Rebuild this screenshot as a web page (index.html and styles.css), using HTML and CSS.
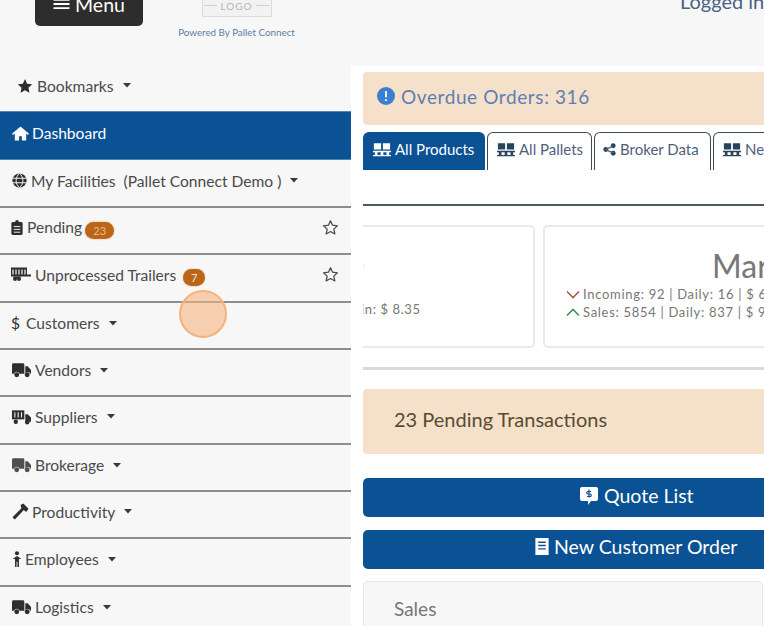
FILE: index.html
```html
<!DOCTYPE html>
<html lang="en">
<head>
<meta charset="utf-8">
<title>Dashboard</title>
<link rel="stylesheet" href="styles.css">
</head>
<body>
<svg class="defs" width="0" height="0" aria-hidden="true">
  <defs>
    <symbol id="pallets" viewBox="0 0 20 16"><path d="M1 1h8v7H1zM11 1h8v7h-8z"/><path d="M0 9.500h20v1.500H0zM0 14h20v1.500H0zM2 11h3v3H2zM8.500 11h3v3h-3zM15 11h3v3h-3z"/></symbol>
    <symbol id="truck" viewBox="0 0 20 16"><path d="M1.500 1h10A1.500 1.500 0 0 1 13 2.500V12H8a3.200 3.200 0 0 0-6 0H0V2.500A1.500 1.500 0 0 1 1.500 1z"/><path d="M14 4h2.500L20 8v4h-.6a3.200 3.200 0 0 0-5.400-.6z"/><circle cx="5" cy="13" r="2.600"/><circle cx="16" cy="13" r="2.600"/></symbol>
    <symbol id="supply" viewBox="0 0 20 16"><path d="M0 1h13v9.500H0z"/><path d="M3 3v5.500M6.500 3v5.500M10 3v5.500" stroke="#f7f7f7" stroke-width="1.100"/><path d="M14 5h2.500L20 8.500V13h-6z"/><circle cx="4" cy="13" r="2.300"/><circle cx="16" cy="13.500" r="2.300"/></symbol>
    <symbol id="caret" viewBox="0 0 8 5"><path d="M0 0h8L4 4.500z"/></symbol>
    <symbol id="staro" viewBox="0 0 24 24"><path d="M12 2.500l2.900 6.300 6.900.8-5.100 4.700 1.400 6.800-6.100-3.400-6.100 3.400 1.400-6.800L2.200 9.600l6.900-.8z" fill="none" stroke="currentColor" stroke-width="1.800" stroke-linejoin="round"/></symbol>
  </defs>
</svg>
<div class="page">
  <header class="topbar">
    <div class="menu-btn"><svg class="burger" viewBox="0 0 16 12"><path d="M0 1h16v1.800H0zM0 5.100h16v1.800H0zM0 9.200h16v1.800H0z"/></svg>Menu</div>
    <div class="brand">
      <div class="logo">LOGO</div>
      <div class="powered">Powered By Pallet Connect</div>
    </div>
    <div class="logged">Logged in</div>
  </header>
  <div class="columns">
    <nav class="sidebar">
      <div class="nav-item nav-bookmarks">
        <svg class="ico ico-star" viewBox="0 0 24 24"><path d="M12 1.500l3.200 7 7.600.9-5.600 5.200 1.500 7.500L12 18.300l-6.700 3.800 1.500-7.500L1.200 9.400l7.600-.9z"/></svg>
        <span>Bookmarks</span><svg class="caret"><use href="#caret"/></svg>
      </div>
      <div class="nav-item nav-active">
        <svg class="ico ico-home" viewBox="0 0 24 20"><path d="M12 0L0 10.500l1.500 1.500L4 10v10h6v-6h4v6h6V10l2.500 2 1.500-1.500z"/></svg>
        <span>Dashboard</span>
      </div>
      <div class="nav-item nav-fac">
        <svg class="ico ico-globe" viewBox="0 0 20 20"><circle cx="10" cy="10" r="9.500"/><path d="M.5 7h19M.5 13h19M10 .5c-6 5-6 14 0 19M10 .5c6 5 6 14 0 19" fill="none" stroke="#f7f7f7" stroke-width="1.300"/></svg>
        <span>My Facilities&nbsp; (Pallet Connect Demo )</span><svg class="caret"><use href="#caret"/></svg>
      </div>
      <div class="nav-item nav-split nav-pending">
        <div class="nav-left">
          <svg class="ico ico-clip" viewBox="0 0 12 16"><path d="M1.500 2H4a2 2 0 0 1 4 0h2.500A1.500 1.500 0 0 1 12 3.500v11a1.500 1.500 0 0 1-1.500 1.500h-9A1.500 1.500 0 0 1 0 14.500v-11A1.500 1.500 0 0 1 1.500 2z"/><path d="M2.500 7h7M2.500 10h7M2.500 13h7" stroke="#f7f7f7" stroke-width="1"/></svg>
          <span>Pending</span><span class="badge badge-wide">23</span>
        </div>
        <svg class="staro"><use href="#staro"/></svg>
      </div>
      <div class="nav-item nav-split nav-trailers">
        <div class="nav-left">
          <svg class="ico ico-trailer" viewBox="0 0 20 14"><path d="M0 0h16v9H0z"/><path d="M2 2v5M5 2v5M8 2v5M11 2v5M14 2v5" stroke="#f7f7f7" stroke-width="1.200"/><path d="M16 7h4v2h-4zM2.500 9h7v2h-7z"/><circle cx="4" cy="11.500" r="2"/><circle cx="8" cy="11.500" r="2"/></svg>
          <span>Unprocessed Trailers</span><span class="badge">7</span>
        </div>
        <svg class="staro"><use href="#staro"/></svg>
      </div>
      <div class="nav-item nav-cust"><span class="dollar">$</span><span>Customers</span><svg class="caret"><use href="#caret"/></svg></div>
      <div class="nav-item nav-vendors"><svg class="ico ico-truck"><use href="#truck"/></svg><span>Vendors</span><svg class="caret"><use href="#caret"/></svg></div>
      <div class="nav-item nav-suppliers"><svg class="ico ico-truck"><use href="#supply"/></svg><span>Suppliers</span><svg class="caret"><use href="#caret"/></svg></div>
      <div class="nav-item nav-brokerage"><svg class="ico ico-truck ico-soft"><use href="#truck"/></svg><span>Brokerage</span><svg class="caret"><use href="#caret"/></svg></div>
      <div class="nav-item nav-prod">
        <svg class="ico ico-hammer" viewBox="0 0 18 18"><path d="M9 2l3-1.500 5.500 5.500-2.500 3.500-2.500-2L3 17.500.5 15 10 5.500z"/></svg>
        <span>Productivity</span><svg class="caret"><use href="#caret"/></svg>
      </div>
      <div class="nav-item nav-emp">
        <svg class="ico ico-person" viewBox="0 0 10 18"><circle cx="5" cy="2.500" r="2.300"/><path d="M5 5.500L10 9H7.200v9H5.500v-6h-1v6H2.800V9H0z"/></svg>
        <span>Employees</span><svg class="caret"><use href="#caret"/></svg>
      </div>
      <div class="nav-item nav-logistics"><svg class="ico ico-truck"><use href="#truck"/></svg><span>Logistics</span><svg class="caret"><use href="#caret"/></svg></div>
    </nav>
    <main class="content">
      <div class="alert alert-overdue">
        <svg class="ico-alert" viewBox="0 0 20 20"><circle cx="10" cy="10" r="10" fill="#3a7fd0"/><path d="M9 4.500h2v7H9zM9 13.500h2v2H9z" fill="#fff"/></svg>
        <span>Overdue Orders:&nbsp;316</span>
      </div>
      <div class="tabs">
        <div class="tab tab-active"><svg class="tab-ico"><use href="#pallets"/></svg>All Products</div>
        <div class="tab"><svg class="tab-ico"><use href="#pallets"/></svg>All Pallets</div>
        <div class="tab"><svg class="tab-ico tab-share" viewBox="0 0 14 14"><circle cx="11" cy="3" r="2.600"/><circle cx="3" cy="7" r="2.600"/><circle cx="11" cy="11" r="2.600"/><path d="M11 3L3 7l8 4" fill="none" stroke="currentColor" stroke-width="1.500"/></svg>Broker Data</div>
        <div class="tab tab-cut"><svg class="tab-ico"><use href="#pallets"/></svg>New Pallets</div>
      </div>
      <div class="tabs-rule"></div>
      <div class="cards">
        <div class="stat-card stat-left">
          <div class="stat-mark">)</div>
          <div class="stat-margin">Margin: $ 8.35</div>
        </div>
        <div class="stat-card stat-right">
          <div class="stat-title">March</div>
          <div class="stat-line"><svg class="chev chev-down" viewBox="0 0 14 9"><path d="M1 1.500l6 6 6-6"/></svg>Incoming: 92 | Daily: 16 | $ 6.20</div>
          <div class="stat-line"><svg class="chev chev-up" viewBox="0 0 14 9"><path d="M1 7.500l6-6 6 6"/></svg>Sales: 5854 | Daily: 837 | $ 9.15</div>
        </div>
      </div>
      <div class="cards-rule"></div>
      <div class="alert alert-pending">23 Pending Transactions</div>
      <div class="action action-quote">
        <svg class="act-ico" viewBox="0 0 18 18"><path d="M2 0h14a2 2 0 0 1 2 2v10a2 2 0 0 1-2 2h-5l-3 4v-4H2a2 2 0 0 1-2-2V2a2 2 0 0 1 2-2z" fill="#fff"/><path d="M9 2.500v8M11 4.500H8a1 1 0 0 0 0 2.500h2a1 1 0 0 1 0 2.500H7" fill="none" stroke="#0a5293" stroke-width="1.200"/></svg>
        <span>Quote List</span>
      </div>
      <div class="action action-order">
        <svg class="act-ico act-receipt" viewBox="0 0 14 18"><path d="M0 0h14v18H0z" fill="#fff"/><path d="M3 4.500h8M3 8h8M3 11.500h8" stroke="#0a5293" stroke-width="1.500"/></svg>
        <span>New Customer Order</span>
      </div>
      <div class="panel"><div class="panel-head">Sales</div></div>
    </main>
  </div>
  <div class="click-dot"></div>
</div>
</body>
</html>
```
FILE: styles.css
```css
* { box-sizing: border-box; }
html, body { margin: 0; padding: 0; }
body {
  width: 764px;
  height: 626px;
  overflow: hidden;
  background: #f7f7f7;
  font-family: "Lato", "Liberation Sans", sans-serif;
  color: #3f3f3f;
}
.defs { position: absolute; }
.page { position: relative; width: 764px; height: 626px; overflow: hidden; }

.topbar { height: 66px; display: flex; align-items: flex-start; }
.menu-btn {
  margin: -18px 0 0 35px;
  width: 108px;
  height: 44px;
  background: #2e2d2d;
  border-radius: 5px;
  color: #fff;
  font-size: 19.500px;
  display: flex;
  align-items: center;
  justify-content: center;
  gap: 5px;
}
.burger { width: 17px; height: 12px; fill: #fff; }
.brand { margin-left: 35px; width: 117px; display: flex; flex-direction: column; align-items: center; margin-top: -8px; }
.logo {
  width: 70px;
  height: 25px;
  border: 1px solid #dcdcdc;
  background: #f2f2f2;
  color: #b5b5b5;
  font-size: 10px;
  letter-spacing: 1px;
  display: flex;
  align-items: center;
  justify-content: center;
  gap: 3px;
  padding-top: 2px;
}
.logo::before, .logo::after { content: ""; width: 13px; height: 1px; background: #cfcfcf; }
.powered { margin-top: 8px; font-size: 9.800px; line-height: 14px; color: #5f7ea6; white-space: nowrap; }
.logged { margin-left: auto; margin-top: -8px; width: 84px; font-size: 20px; line-height: 18px; color: #4a6284; white-space: nowrap; }

.columns { display: flex; align-items: flex-start; height: 560px; }
.sidebar { width: 351px; flex: none; }
.nav-item {
  display: flex;
  align-items: center;
  height: 47px;
  padding: 0 0 3px 11px;
  font-size: 15.600px;
  color: #4a4a4a;
  border-bottom: 2px solid #8d8d8d;
  white-space: nowrap;
}
.nav-bookmarks { height: 45px; border-bottom: 0; padding: 0 0 6px 17px; }
.nav-active { height: 49px; background: #0a5293; color: #fff; border-bottom: 0; border-top: 1px solid #4d86b5; padding-bottom: 6px; box-shadow: inset 0 -1px 0 #4d86b5; }
.nav-fac { height: 48px; padding-bottom: 5px; }
.nav-split { justify-content: space-between; padding-right: 12px; }
.nav-pending { height: 47px; padding-bottom: 7px; }
.nav-trailers { height: 48px; padding-bottom: 7px; }
.nav-left { display: flex; align-items: center; }
.nav-cust { padding-bottom: 5px; }
.nav-vendors { padding-bottom: 5px; }
.nav-suppliers { height: 48px; padding-bottom: 7px; }
.nav-brokerage { padding-bottom: 5px; }
.nav-prod { padding-bottom: 6px; }
.nav-emp { height: 48px; padding-bottom: 6px; }
.nav-logistics { height: 40px; border-bottom: 0; padding-bottom: 0; }

.ico { fill: #2e2e2e; flex: none; margin-right: 4px; }
.ico-star { width: 16px; height: 16px; }
.ico-home { width: 17px; height: 15px; fill: #fff; margin-right: 3px; margin-left: 1px; }
.ico-globe { width: 15px; height: 15px; margin-left: 1px; }
.ico-clip { width: 12px; height: 15px; }
.ico-trailer { width: 20px; height: 15px; }
.ico-truck { width: 19px; height: 16px; margin: 0 4px 0 1px; }
.ico-soft { fill: #4e4e4e; }
.ico-hammer { width: 17px; height: 17px; margin: 0 3px 0 1px; }
.ico-person { width: 10px; height: 16px; margin: 0 3px 0 1px; }
.dollar { margin-right: 6px; color: #2e2e2e; }
.caret { width: 8px; height: 5px; margin-left: 9px; fill: #3a3a3a; flex: none; }
.staro { width: 17px; height: 17px; color: #4a4a4a; flex: none; }
.badge {
  margin: 6px 0 0 7px;
  min-width: 22px;
  height: 17px;
  border-radius: 9px;
  background: #b9661a;
  color: #f5e4d0;
  font-size: 11px;
  line-height: 17px;
  text-align: center;
  box-shadow: 0 0 2px #e9a868;
}
.badge-wide { min-width: 29px; margin-left: 3px; color: #f0b77c; }

.content {
  flex: 1;
  min-width: 0;
  height: 560px;
  background: #fff;
  padding: 6px 0 0 12px;
  overflow: hidden;
}
.alert { background: #f5e1c9; border-radius: 4px; display: flex; align-items: center; }
.alert-overdue {
  width: 420px;
  height: 53px;
  padding: 0 0 5px 14px;
  font-size: 19px;
  letter-spacing: .6px;
  color: #5d7fb5;
  gap: 6px;
}
.ico-alert { width: 18px; height: 18px; flex: none; }
.tabs { display: flex; gap: 2px; margin-top: 7px; width: 420px; overflow: hidden; }
.tab {
  height: 38px;
  padding: 0 0 5px 9px;
  display: flex;
  align-items: center;
  flex: none;
  font-size: 15px;
  color: #50607a;
  background: #fff;
  border: 1px solid #3e4a55;
  border-bottom: 0;
  border-radius: 6px 6px 0 0;
  gap: 4px;
  white-space: nowrap;
}
.tab-active { background: #0a5293; color: #fff; border-color: #0a5293; width: 122px; }
.tab:nth-child(2) { width: 105px; }
.tab:nth-child(3) { width: 117px; padding-left: 8px; }
.tab-cut { padding-right: 9px; }
.tab-ico { width: 18px; height: 15px; fill: currentColor; flex: none; }
.tab:not(.tab-active) .tab-ico { fill: #28435f; }
.tab-share { width: 13px; height: 13px; }
.tabs-rule { width: 420px; height: 2px; background: #4c5a66; margin-top: 34px; }
.cards { display: flex; gap: 8px; margin-top: 19px; width: 402px; }
.stat-card {
  flex: none;
  height: 123px;
  background: #fff;
  border: 2px solid #e9e9e9;
  border-radius: 5px;
}
.stat-left { width: 172px; border-left: 0; border-radius: 0 5px 5px 0; padding-top: 27px; font-size: 13px; color: #777; letter-spacing: .6px; overflow: hidden; }
.stat-mark { font-size: 18px; line-height: 20px; color: #b07070; margin-left: -4px; }
.stat-margin { margin-top: 26px; line-height: 18px; margin-left: -34px; white-space: nowrap; }
.stat-right { width: 260px; padding: 20px 0 0 21px; overflow: hidden; white-space: nowrap; font-size: 13px; letter-spacing: .7px; color: #777; }
.stat-title { font-size: 32px; line-height: 38px; letter-spacing: 0; color: #777; padding-left: 146px; height: 38px; }
.stat-line { display: flex; align-items: center; gap: 3px; height: 18px; }
.chev { width: 14px; height: 9px; fill: none; stroke-width: 1.600; flex: none; }
.chev-down { stroke: #b0564f; }
.chev-up { stroke: #43905a; }
.cards-rule { width: 402px; height: 3px; background: #d9d9d9; margin-top: 19px; }
.alert-pending {
  width: 420px;
  height: 65px;
  margin-top: 19px;
  padding: 0 0 6px 31px;
  font-size: 20px;
  color: #5a4a32;
}
.action {
  width: 420px;
  height: 39px;
  background: #0a5293;
  color: #fff;
  border-radius: 5px;
  display: flex;
  align-items: center;
  font-size: 19.500px;
  gap: 6px;
}
.action-quote { margin-top: 24px; padding: 0 0 4px 217px; }
.action-order { margin-top: 13px; padding: 0 0 6px 172px; gap: 5px; }
.act-ico { width: 18px; height: 18px; flex: none; }
.act-receipt { width: 14px; height: 17px; }
.panel {
  width: 400px;
  height: 60px;
  margin-top: 12px;
  background: #f7f7f7;
  border: 1px solid #e6e6e6;
  border-radius: 5px 5px 0 0;
}
.panel-head { padding: 15px 0 0 30px; font-size: 19px; line-height: 24px; color: #777; }

.click-dot {
  position: absolute;
  left: 179px;
  top: 290px;
  width: 48px;
  height: 48px;
  border-radius: 50%;
  background: rgba(245, 180, 130, .6);
  border: 2px solid #f7b27a;
}
```
